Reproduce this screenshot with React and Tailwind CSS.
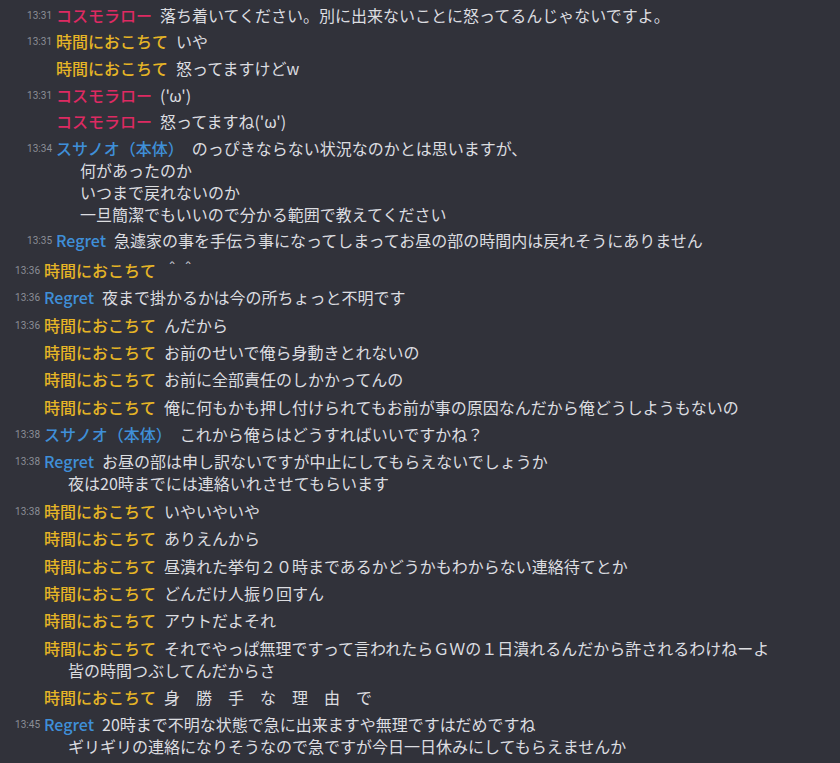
import React from "react";

const PINK = "text-[#dd2a62]";
const GOLD = "text-[#e6b526]";
const BLUE = "text-[#3f8fd8]";

const topLog = [
  { time: "13:31", name: "コスモラロー", color: PINK, lines: ["落ち着いてください。別に出来ないことに怒ってるんじゃないですよ。"] },
  { time: "13:31", name: "時間におこちて", color: GOLD, lines: ["いや"] },
  { name: "時間におこちて", color: GOLD, lines: ["怒ってますけどw"] },
  { time: "13:31", name: "コスモラロー", color: PINK, lines: ["('ω')"] },
  { name: "コスモラロー", color: PINK, lines: ["怒ってますね('ω')"] },
  {
    time: "13:34",
    name: "スサノオ（本体）",
    color: BLUE,
    lines: [
      "のっぴきならない状況なのかとは思いますが、",
      "何があったのか",
      "いつまで戻れないのか",
      "一旦簡潔でもいいので分かる範囲で教えてください",
    ],
  },
  { time: "13:35", name: "Regret", color: BLUE, lines: ["急遽家の事を手伝う事になってしまってお昼の部の時間内は戻れそうにありません"] },
];

const bottomLog = [
  { time: "13:36", name: "時間におこちて", color: GOLD, lines: ["＾＾"] },
  { time: "13:36", name: "Regret", color: BLUE, lines: ["夜まで掛かるかは今の所ちょっと不明です"] },
  { time: "13:36", name: "時間におこちて", color: GOLD, lines: ["んだから"] },
  { name: "時間におこちて", color: GOLD, lines: ["お前のせいで俺ら身動きとれないの"] },
  { name: "時間におこちて", color: GOLD, lines: ["お前に全部責任のしかかってんの"] },
  { name: "時間におこちて", color: GOLD, lines: ["俺に何もかも押し付けられてもお前が事の原因なんだから俺どうしようもないの"] },
  { time: "13:38", name: "スサノオ（本体）", color: BLUE, lines: ["これから俺らはどうすればいいですかね？"] },
  {
    time: "13:38",
    name: "Regret",
    color: BLUE,
    lines: ["お昼の部は申し訳ないですが中止にしてもらえないでしょうか", "夜は20時までには連絡いれさせてもらいます"],
  },
  { time: "13:38", name: "時間におこちて", color: GOLD, lines: ["いやいやいや"] },
  { name: "時間におこちて", color: GOLD, lines: ["ありえんから"] },
  { name: "時間におこちて", color: GOLD, lines: ["昼潰れた挙句２０時まであるかどうかもわからない連絡待てとか"] },
  { name: "時間におこちて", color: GOLD, lines: ["どんだけ人振り回すん"] },
  { name: "時間におこちて", color: GOLD, lines: ["アウトだよそれ"] },
  {
    name: "時間におこちて",
    color: GOLD,
    lines: ["それでやっぱ無理ですって言われたらＧＷの１日潰れるんだから許されるわけねーよ", "皆の時間つぶしてんだからさ"],
  },
  { name: "時間におこちて", color: GOLD, lines: ["身　勝　手　な　理　由　で"] },
  {
    time: "13:45",
    name: "Regret",
    color: BLUE,
    lines: ["20時まで不明な状態で急に出来ますや無理ですはだめですね", "ギリギリの連絡になりそうなので急ですが今日一日休みにしてもらえませんか"],
  },
];

const Message = ({ msg, pad }) => {
  const [first, ...rest] = msg.lines;
  return (
    <div className={pad}>
      <div className="flex h-[22px] items-center whitespace-nowrap">
        <span className="w-[34px] shrink-0 pr-[4px] pt-[2px] text-right text-[10px] leading-none text-[#8b8e96] font-['Roboto',sans-serif]">
          {msg.time || ""}
        </span>
        <span className={`mr-2 font-medium ${msg.color}`}>{msg.name}</span>
        <span className="text-[#dcdde0]">{first}</span>
      </div>
      {rest.map((line, i) => (
        <div key={i} className="h-[22px] pl-[58px] whitespace-nowrap text-[#dcdde0]">
          {line}
        </div>
      ))}
    </div>
  );
};

export default function App() {
  return (
    <div className="h-screen w-full overflow-hidden bg-[#31323a] text-[16px] leading-[22px] font-['Noto_Sans_CJK_JP','Noto_Sans',sans-serif]">
      <div className="pl-[22px] pt-[1.5px]">
        {topLog.map((m, i) => (
          <Message key={i} msg={m} pad="py-[2.3px]" />
        ))}
      </div>
      <div className="pl-[10px] pt-[2.5px]">
        {bottomLog.map((m, i) => (
          <Message key={i} msg={m} pad="py-[2.7px]" />
        ))}
      </div>
    </div>
  );
}
